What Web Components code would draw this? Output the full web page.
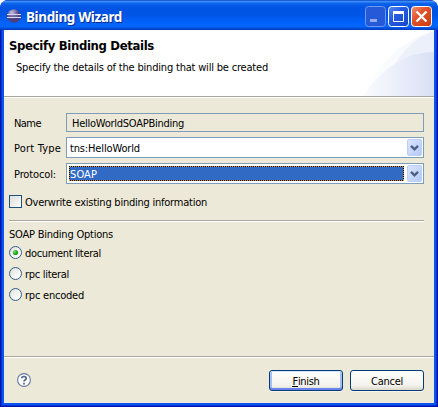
<!DOCTYPE html>
<html lang="en"><head><meta charset="utf-8"><title>Binding Wizard</title>
<style>html,body{margin:0;background:#fff;overflow:hidden}</style></head><body>
<wizard-window>
  <title-bar slot="title"></title-bar>
  <wizard-header slot="header"></wizard-header>
  <wizard-form slot="body"></wizard-form>
  <wizard-footer slot="footer"></wizard-footer>
</wizard-window>
<script>
const define=(name,html,after)=>customElements.define(name,class extends HTMLElement{
  constructor(){super();this.attachShadow({mode:'open'}).innerHTML=html}
  connectedCallback(){if(after)after(this,this.shadowRoot)}
});
define('title-bar',`<style>
:host{display:flex;z-index:1;box-sizing:border-box;height:30px;padding:0 6px 0 7px;align-items:center;border-radius:7px 7px 0 0;background:linear-gradient(#0a45c8 0,#3b8cf5 5%,#0b62ea 12%,#0054e3 25%,#0055e5 50%,#0062fb 75%,#0066ff 88%,#0050dc 94%,#0038b8 100%)}
fit-text{font:bold 13.5px "Noto Sans","Open Sans",sans-serif;height:18px;line-height:18px;color:#fff;text-shadow:1px 1px #0a2b91;margin:4px auto 0 5px}
svg{flex:none;display:block}.b{margin:3px 0 0 2px}</style>
<svg width="14" height="14" style="margin-top:2px"><defs><radialGradient id="g" cx=".35" cy=".25"><stop stop-color="#c4bfe0"/><stop offset=".55" stop-color="#8378ae"/><stop offset="1" stop-color="#4a4080"/></radialGradient></defs><circle cx="7" cy="7" r="6.8" fill="url(#g)"/><path d="M0 5.5h14M0 8.5h14" stroke="#d8daf3"/><path d="M1 7h12" stroke="#655d9e"/></svg>
<fit-text w="96" text="Binding Wizard"></fit-text>
<svg class="b" width="21" height="21"><rect x=".5" y=".5" width="20" height="20" rx="3" fill="#2659d7" stroke="#6b9af0"/><path d="M5 14.5h7" stroke="#93a9eb" stroke-width="3"/></svg>
<svg class="b" width="21" height="21"><defs><linearGradient id="m" x2="1" y2="1"><stop stop-color="#5b8cf5"/><stop offset=".4" stop-color="#255be2"/><stop offset="1" stop-color="#1646c8"/></linearGradient></defs><rect x=".5" y=".5" width="20" height="20" rx="3" fill="url(#m)" stroke="#fff"/><path d="M5.5 5v10.500h10V5" fill="none" stroke="#fff"/><path d="M5 6.500h11" stroke="#fff" stroke-width="3"/></svg>
<svg class="b" width="21" height="21"><defs><linearGradient id="c" x2="1" y2="1"><stop stop-color="#f09479"/><stop offset=".4" stop-color="#e2532b"/><stop offset="1" stop-color="#c63a12"/></linearGradient></defs><rect x=".5" y=".5" width="20" height="20" rx="3" fill="url(#c)" stroke="#fff"/><path d="M5.500 5.500l10 10M15.500 5.500l-10 10" stroke="#fff" stroke-width="2.300"/></svg>`);
define('wizard-header',`<style>
:host{display:grid;grid-template-columns:1fr 75px;height:66px;background:#fff;border-bottom:1px solid #aca899;box-shadow:0 1px #fff;color:#000}
div{padding:8px 0 0 5px}.h{font:bold 13px "DejaVu Sans Condensed","DejaVu Sans",sans-serif;height:16px;line-height:16px}.d{margin:6px 0 0 7px}svg{display:block}</style>
<div><fit-text class="h" w="145" text="Specify Binding Details"></fit-text><fit-text class="d" w="252" text="Specify the details of the binding that will be created"></fit-text></div>
<svg width="75" height="66"><defs><linearGradient id="a"><stop offset="0" stop-color="#fff"/><stop offset=".6" stop-color="#f7f9fd"/><stop offset="1" stop-color="#f1f4fc"/></linearGradient><linearGradient id="b"><stop offset="0" stop-color="#fafbfe"/><stop offset=".4" stop-color="#edf1fb"/><stop offset="1" stop-color="#d9e0f4"/></linearGradient></defs>
<path d="M2 66Q28 15 75 1V66Z" fill="url(#a)"/><path d="M35 36Q50 10 75 1V22Q55 23 35 36Z" fill="#e8edf9" opacity=".65"/><path d="M4 66Q34 22 75 22V66Z" fill="url(#b)"/></svg>`);
define('combo-box',`<style>
:host{display:flex;box-sizing:border-box;height:21px;border:1px solid #7f9db9;background:#fff;padding:1px;align-items:center}
.v{flex:1;height:15px;box-sizing:border-box;margin:0 3px 0 1px;padding:1px 0 0 1px}
:host([selected]) .v{background:repeating-linear-gradient(90deg,#000 0 1px,#ce953a 1px 2px) 0 0/100% 1px no-repeat,repeating-linear-gradient(90deg,#ce953a 0 1px,#000 1px 2px) 0 100%/100% 1px no-repeat,repeating-linear-gradient(#000 0 1px,#ce953a 1px 2px) 0 0/1px 100% no-repeat,repeating-linear-gradient(#000 0 1px,#ce953a 1px 2px) 100% 0/1px 100% no-repeat,#316ac5;color:#fff}
svg{display:block}</style><div class="v"><slot></slot></div>
<svg width="15" height="17"><defs><linearGradient id="q" x2="1" y2="1"><stop stop-color="#dce6ff"/><stop offset="1" stop-color="#b2c9f8"/></linearGradient></defs><rect x=".5" y=".5" width="14" height="16" rx="1.500" fill="url(#q)" stroke="#bdcff8"/><path d="M4 6.800l3.500 3.500L11 6.800" fill="none" stroke="#4d6185" stroke-width="2.400"/></svg>`);
define('read-only-field',`<style>:host{display:block;box-sizing:border-box;height:19px;border:1px solid #7f9db9;padding:2px 0 0 5px}</style><slot></slot>`);
define('check-box',`<style>:host{display:flex;gap:3px;height:14px}svg{flex:none}</style><svg width="13" height="13"><defs><linearGradient id="k" x2="1" y2="1"><stop stop-color="#dcdcd7"/><stop offset="1" stop-color="#fff"/></linearGradient></defs><rect x=".5" y=".5" width="12" height="12" fill="url(#k)" stroke="#1c5180"/></svg><slot></slot>`);
define('radio-button',`<style>:host{display:flex;gap:3px;height:14px}svg{flex:none}.dot{display:none}:host([checked]) .dot{display:block}</style><svg width="13" height="13"><defs><linearGradient id="r" x2="1" y2="1"><stop stop-color="#dcdcd7"/><stop offset=".8" stop-color="#fff"/></linearGradient><radialGradient id="d" cx=".35" cy=".35"><stop stop-color="#6fd96b"/><stop offset="1" stop-color="#1da01b"/></radialGradient></defs><circle cx="6.500" cy="6.500" r="6" fill="url(#r)" stroke="#2f5f8b"/><circle class="dot" cx="6.500" cy="6.500" r="2.600" fill="url(#d)"/></svg><slot></slot>`);
define('wizard-form',`<style>
:host{display:block;padding:16px 10px 0 5px}
.g{display:grid;grid-template-columns:52px 1fr;grid-template-rows:19px 21px 21px;row-gap:5px;padding-left:5px}
.g>fit-text{margin-top:3px}.g>.l2{margin-top:4px}.g>.l3{margin-top:4px}
check-box{margin-top:11px}hr{margin:11px 0 0;border:0;height:1px;background:#aca899;box-shadow:0 1px #fff}
.o{display:grid;gap:7px;margin-top:5px}</style>
<div class="g"><fit-text w="27" text="Name"></fit-text><read-only-field><fit-text w="112" text="HelloWorldSOAPBinding"></fit-text></read-only-field>
<fit-text class="l2" w="47" text="Port Type"></fit-text><combo-box><fit-text w="70" text="tns:HelloWorld"></fit-text></combo-box>
<fit-text class="l3" w="42" text="Protocol:"></fit-text><combo-box selected><fit-text w="27" text="SOAP"></fit-text></combo-box></div>
<check-box><fit-text w="182" text="Overwrite existing binding information"></fit-text></check-box><hr>
<fit-text style="margin-top:6px" w="104" text="SOAP Binding Options"></fit-text>
<div class="o"><radio-button checked><fit-text w="76" text="document literal"></fit-text></radio-button><radio-button><fit-text w="44" text="rpc literal"></fit-text></radio-button><radio-button><fit-text w="59" text="rpc encoded"></fit-text></radio-button></div>`);
define('push-button',`<style>:host{display:flex;box-sizing:border-box;width:74px;height:21px;border:1px solid #003c74;border-radius:3px;background:linear-gradient(#fff,#f4f3ee 75%,#dcd8cc);justify-content:center;padding-top:3px;box-shadow:0 1px #f7f5ed}
:host([default]){box-shadow:inset 0 1px #cee7ff,inset 0 -2px #6982ee,inset 2px 0 #a5c0f2,inset -2px 0 #a5c0f2,0 1px #f7f5ed}</style><slot></slot>`);
define('wizard-footer',`<style>:host{display:flex;box-sizing:border-box;height:47px;border-top:1px solid #aca899;box-shadow:inset 0 1px #fff;padding:13px 10px 0 13px;gap:7px}svg{margin:3px auto 0 0;flex:none}</style>
<svg width="14" height="14"><circle cx="7" cy="7" r="6.400" fill="#fff" stroke="#60799d" stroke-width="1.100"/><path d="M4.800 5.300Q4.800 3.500 7 3.500T9.200 5.200Q9.200 6.300 8 6.900Q7 7.400 7 8.600M7 9.700V11.400" fill="none" stroke="#4b6389" stroke-width="1.700"/></svg>
<push-button default><fit-text key w="27" text="Finish"></fit-text></push-button><push-button><fit-text w="32" text="Cancel"></fit-text></push-button>`);
define('wizard-window',`<style>
:host{display:grid;box-sizing:border-box;width:438px;height:407px;grid-template-rows:30px 1fr;border-radius:8px 8px 0 0;overflow:hidden;background:#0831d9;font:11px "DejaVu Sans Condensed","DejaVu Sans",sans-serif;color:#000}
.f{display:grid;grid-template-rows:67px 1fr 47px;background:#ece9d8;margin:0 4px 4px;box-shadow:0 0 0 2px #0855ee,0 0 0 3px #0831d9,0 0 0 4px #0015a8}
</style><slot name="title"></slot><div class="f"><slot name="header"></slot><slot name="body"></slot><slot name="footer"></slot></div>`);
// A single line of text tracked to an exact width (w). Registered last, so the
// inherited font is already in place when the line is measured.
define('fit-text',`<style>:host{display:block;white-space:nowrap;height:14px;line-height:16px;flex:none}span{display:inline-block}u{text-decoration:none;box-shadow:0 1px 0 #000;display:inline-block;height:12px}</style><span></span>`,(el,r)=>{
  const s=r.querySelector('span'),t=el.getAttribute('text'),w=+el.getAttribute('w');
  if(el.hasAttribute('key')){s.innerHTML='<u></u>';s.firstChild.textContent=t[0];s.append(t.slice(1))}else s.textContent=t;
  s.style.letterSpacing=(w-s.getBoundingClientRect().width)/t.length+'px';
});
</script></body></html>
